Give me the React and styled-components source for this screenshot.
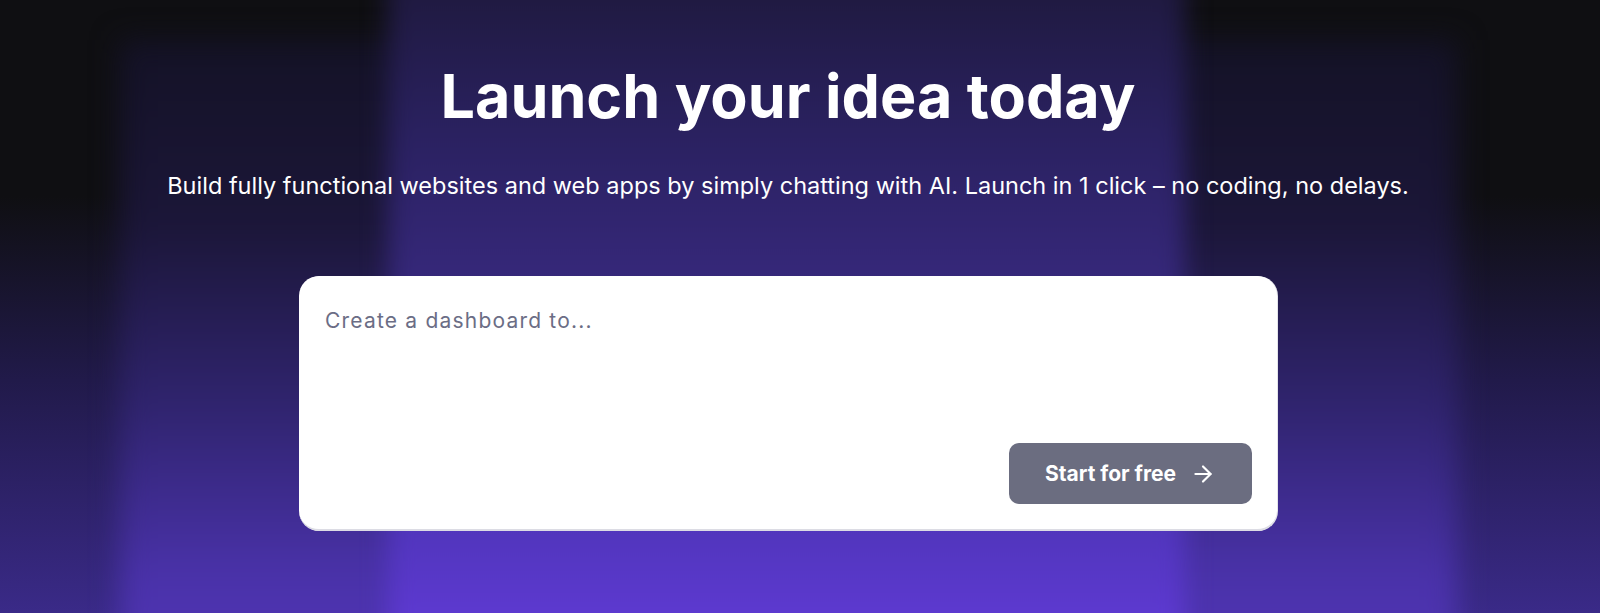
import React from 'react'
import styled, { createGlobalStyle } from 'styled-components'
import { ArrowRight } from 'lucide-react'

const GlobalStyle = createGlobalStyle`
  * { box-sizing: border-box; }
  html, body { margin: 0; padding: 0; background: #0f0f12; }
  body { font-family: Inter, "Noto Sans", sans-serif; }
`

const Page = styled.section`
  position: relative;
  min-height: 613px;
  height: 100vh;
  overflow: hidden;
  padding: 60px 24px 0 0;
  display: flex;
  flex-direction: column;
  align-items: center;
  isolation: isolate;
  background: linear-gradient(180deg, #0f0f12 0%, #0f0f12 32%, #211a4a 62%, #3a2a88 100%);

  /* wide glow column */
  &::before {
    content: '';
    position: absolute;
    z-index: -2;
    left: 120px;
    right: 143px;
    top: 40px;
    bottom: -40px;
    filter: blur(14px);
    background: linear-gradient(180deg, #141226 0%, #1b1638 30%, #30246f 60%, #4a32aa 88%, #5035b4 100%);
  }

  /* bright centre column */
  &::after {
    content: '';
    position: absolute;
    z-index: -1;
    left: 388px;
    right: 415px;
    top: -40px;
    bottom: -40px;
    filter: blur(12px);
    background: linear-gradient(180deg, #1d1839 0%, #2a2160 25%, #38297f 50%, #4d34b6 78%, #623bd8 100%);
  }
`

const Title = styled.h1`
  margin: 0;
  font-size: 61px;
  line-height: 72px;
  font-weight: 700;
  color: #ffffff;
`

const Subtitle = styled.p`
  margin: 38px 0 0;
  font-size: 23.5px;
  line-height: 32px;
  font-weight: 400;
  color: #ffffff;
`

const PromptCard = styled.form`
  margin-top: 74px;
  width: 978px;
  height: 255px;
  display: flex;
  flex-direction: column;
  padding: 30px 25px 25px 26px;
  background: #ffffff;
  border-radius: 20px;
  border-bottom: 2px solid #dcdce4;
  box-shadow: 1px 0 0 #e4e4ea;
`

const PromptInput = styled.textarea`
  flex: 1;
  border: none;
  outline: none;
  resize: none;
  padding: 0;
  font-family: inherit;
  font-size: 21px;
  line-height: 30px;
  letter-spacing: 1.2px;
  color: #1f2030;
  background: transparent;

  &::placeholder {
    color: #6b6d85;
  }
`

const Actions = styled.div`
  display: flex;
  justify-content: flex-end;
`

const StartButton = styled.button`
  display: flex;
  align-items: center;
  justify-content: center;
  gap: 14px;
  width: 243px;
  height: 61px;
  border: none;
  border-radius: 10px;
  background: #6b6d80;
  color: #ffffff;
  font-family: inherit;
  font-size: 21px;
  font-weight: 700;
  cursor: pointer;
`

export default function App() {
  return (
    <>
      <GlobalStyle />
      <Page>
        <Title>Launch your idea today</Title>
        <Subtitle>
          Build fully functional websites and web apps by simply chatting with AI. Launch in 1 click – no coding, no delays.
        </Subtitle>
        <PromptCard onSubmit={(e) => e.preventDefault()}>
          <PromptInput placeholder="Create a dashboard to..." />
          <Actions>
            <StartButton type="submit">
              Start for free
              <ArrowRight size={26} strokeWidth={2} />
            </StartButton>
          </Actions>
        </PromptCard>
      </Page>
    </>
  )
}
